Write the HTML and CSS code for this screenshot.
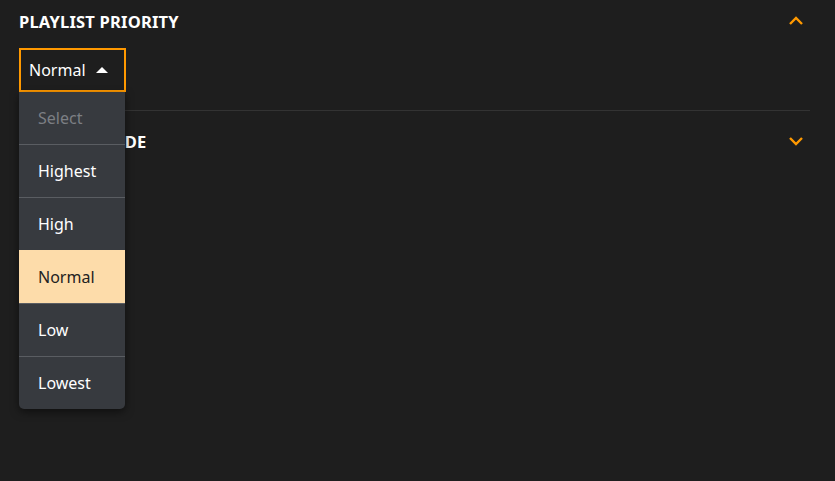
FILE: index.html
```html
<!DOCTYPE html>
<html lang="en">
<head>
  <meta charset="UTF-8">
  <title>Playlist Settings</title>
  <link rel="stylesheet" href="styles.css">
</head>
<body>

  <section class="panel open">
    <div class="panel-head">
      <h2>PLAYLIST PRIORITY</h2>
      <svg class="chevron" width="16" height="10" viewBox="0 0 16 10"><path d="M2 8 L8 2 L14 8" fill="none" stroke="#ff9900" stroke-width="2.4"/></svg>
    </div>

    <div class="dropdown">
      <button class="select-btn">Normal <span class="caret"></span></button>
      <ul class="options">
        <li class="placeholder">Select</li>
        <li>Highest</li>
        <li>High</li>
        <li class="selected">Normal</li>
        <li>Low</li>
        <li>Lowest</li>
      </ul>
    </div>
  </section>

  <section class="panel">
    <div class="panel-head">
      <h2>SHUFFLE MODE</h2>
      <svg class="chevron" width="16" height="10" viewBox="0 0 16 10"><path d="M2 2 L8 8 L14 2" fill="none" stroke="#ff9900" stroke-width="2.4"/></svg>
    </div>
  </section>

</body>
</html>
```

FILE: styles.css
```css
html, body {
  min-height: 100%;
}

body {
  margin: 0;
  min-height: 481px;
  padding: 0 25px 0 19px;
  background: #1e1e1e;
  font-family: "Noto Sans", Arial, sans-serif;
  color: #fff;
}

.panel {
  position: relative;
  border-bottom: 1px solid #333;
  padding-bottom: 18px;
}

.panel.open {
  z-index: 2;
}

.panel + .panel {
  border-bottom: none;
  z-index: 1;
}

.panel-head {
  display: flex;
  justify-content: space-between;
  align-items: center;
  padding-right: 6px;
  height: 42px;
}

.panel + .panel .panel-head {
  height: 60px;
}

h2 {
  margin: 0;
  font-size: 16.5px;
  font-weight: bold;
  letter-spacing: 0.2px;
}

.dropdown {
  position: relative;
  width: 107px;
  margin-top: 6px;
}

.select-btn {
  display: flex;
  align-items: center;
  gap: 10px;
  width: 107px;
  height: 44px;
  padding: 0 8px;
  background: transparent;
  border: 2px solid #ff9900;
  color: #fff;
  font-family: inherit;
  font-size: 16px;
}

.caret {
  width: 0;
  height: 0;
  border-left: 6px solid transparent;
  border-right: 6px solid transparent;
  border-bottom: 6px solid #fff;
}

.options {
  position: absolute;
  top: 44px;
  left: 0;
  width: 106px;
  margin: 0;
  padding: 0;
  list-style: none;
  background: #373a3f;
  border-radius: 0 0 5px 5px;
  box-shadow: 0 3px 8px rgba(0,0,0,0.5);
}

.options li {
  height: 52px;
  line-height: 52px;
  padding-left: 19px;
  font-size: 16px;
  color: #fff;
  border-top: 1px solid #5a5d62;
}

.options li:first-child {
  border-top: none;
}

.options .placeholder {
  color: #7c7f84;
}

.options .selected {
  background: #fddcaa;
  color: #222;
  border-top-color: #fddcaa;
}

.options .selected + li {
  border-top-color: #5a5d62;
}
```
